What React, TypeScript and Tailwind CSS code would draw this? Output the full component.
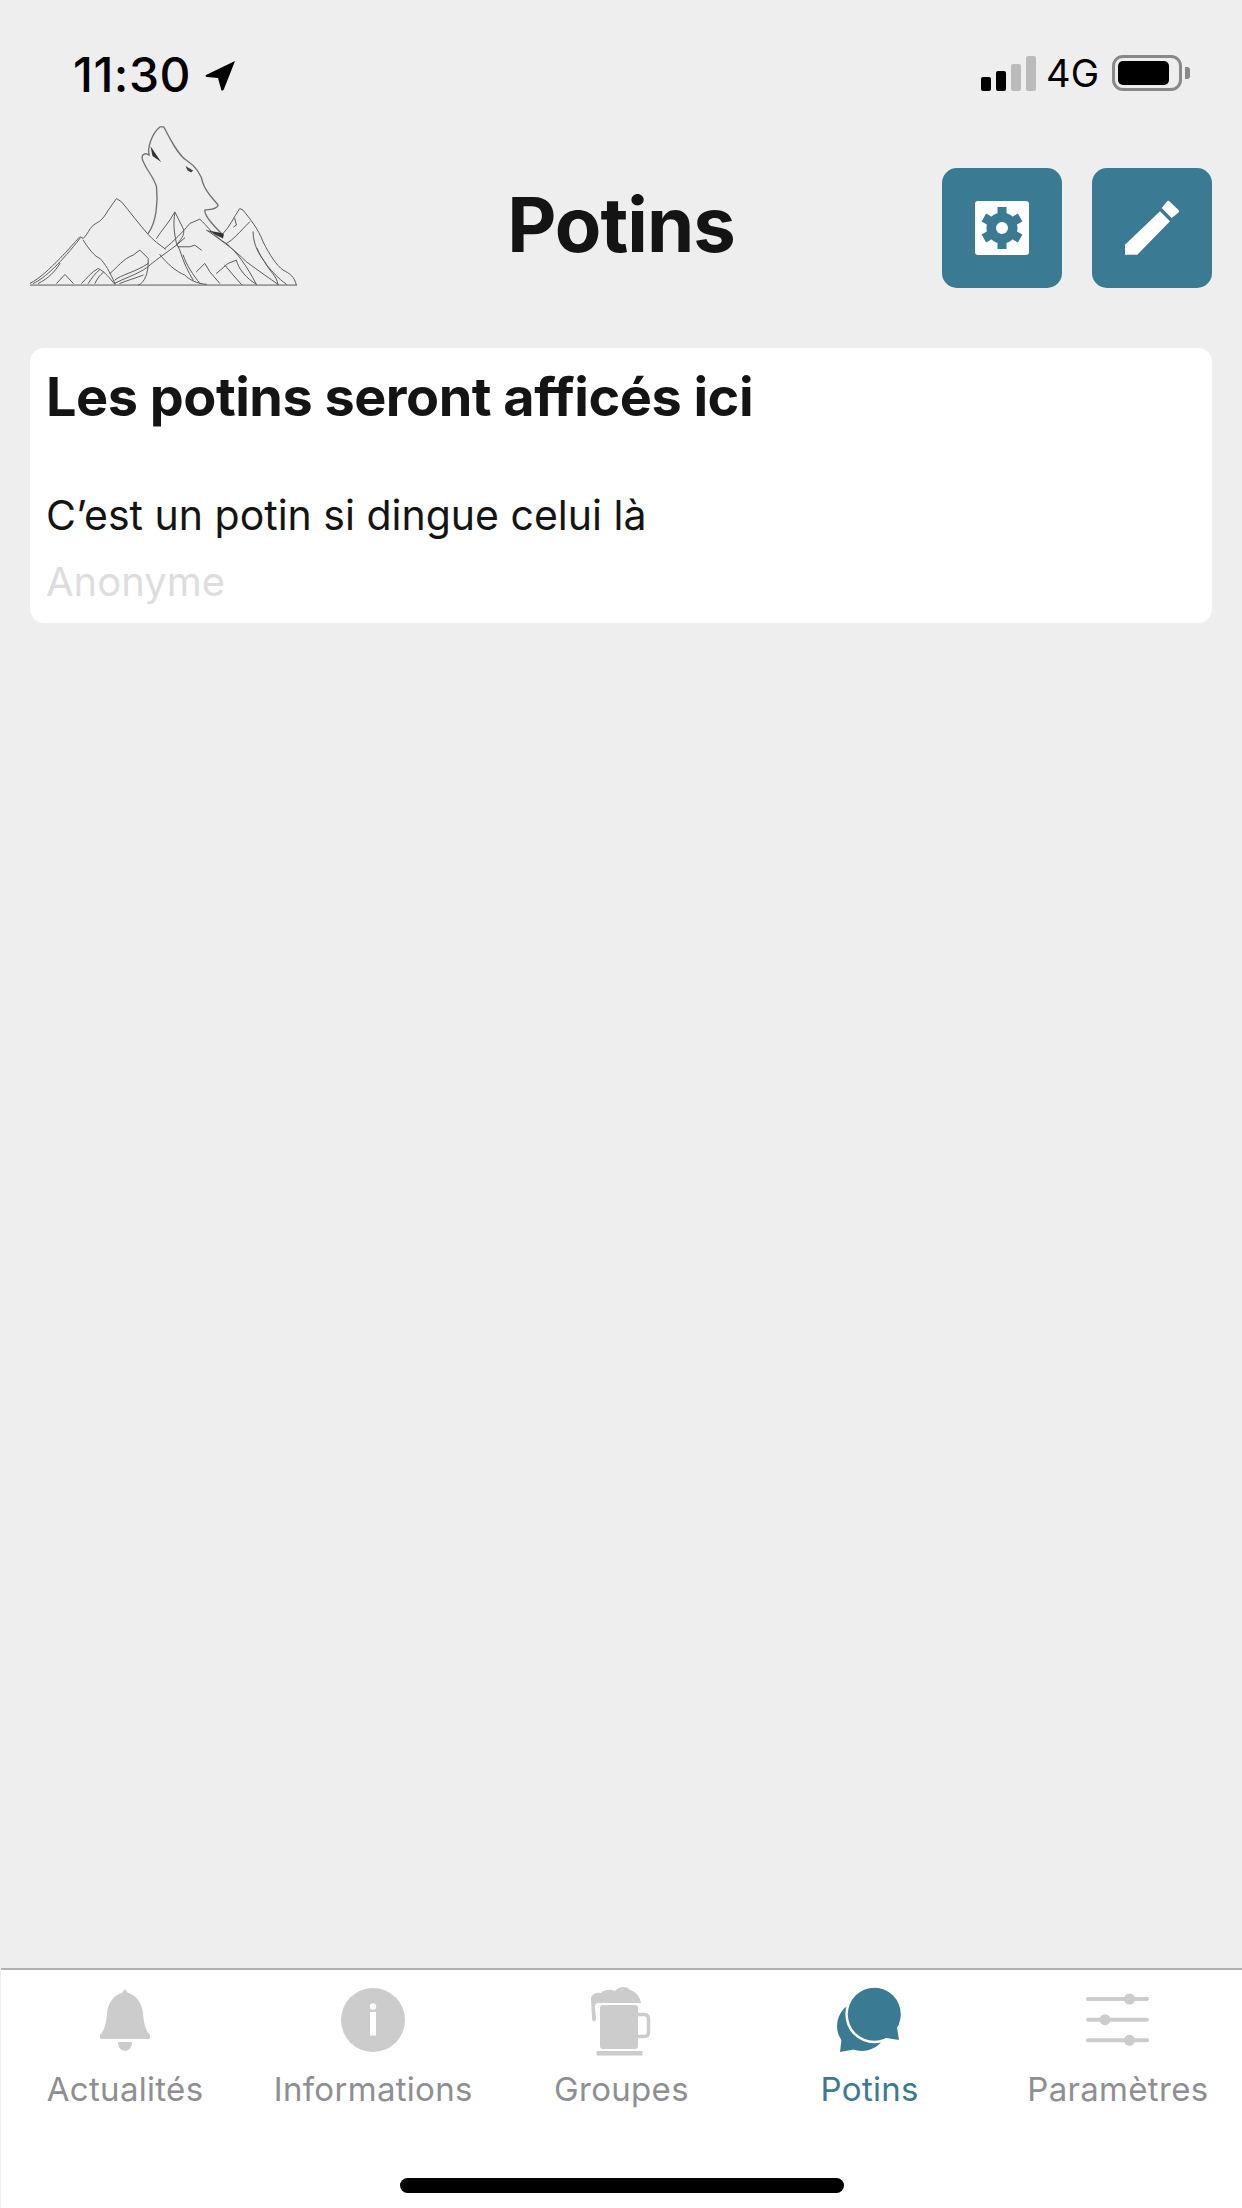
import React from "react";

const tabs = ["Actualités", "Informations", "Groupes", "Potins", "Paramètres"];

function Logo() {
  return (
    <svg width="268" height="162" viewBox="30 30 805 485" fill="none" stroke="#5a5a5a" strokeWidth="3" strokeLinejoin="round" strokeLinecap="round" className="mb-px">
      <path strokeWidth="4" stroke="#707070" d="M385 355C410 320 415 260 410 215C400 180 375 160 367 130C365 115 378 112 388 120C382 100 395 55 420 35L432 35C450 70 475 120 500 135C530 155 545 180 550 205C560 235 585 255 595 270C590 285 565 282 555 285C555 305 585 335 610 360" />
      <path fill="#333" stroke="none" d="M392 93L424 140L398 122Z" />
      <path fill="#444" stroke="none" d="M497 152L520 166L514 172L503 166Z" />
      <path fill="#333" stroke="none" d="M562 345L612 355L610 370L585 358Z" />
      <path d="M30 510L830 510" />
      <path d="M30 505C60 490 90 460 120 430C140 410 165 380 180 365L190 370C205 355 205 345 220 330C235 320 245 320 265 285L290 250L305 260C330 290 360 330 385 358C400 375 420 390 437 402" />
      <path d="M190 375C205 400 225 425 240 430C255 445 270 470 285 505" />
      <path d="M40 505C75 490 125 440 180 370M55 505C85 490 105 470 120 445" />
      <path d="M110 505L135 478L160 505" />
      <path d="M185 505C200 490 215 470 235 460C255 470 270 490 285 508M205 505C215 490 225 475 238 465M225 505C232 490 240 480 250 472" />
      <path d="M270 475C290 460 310 430 340 420L360 405L385 430L385 445C350 470 300 480 285 495" />
      <path d="M285 505C310 490 350 480 385 455C400 440 430 420 470 390L495 368" />
      <path d="M300 505C325 495 345 490 370 480M355 510C375 505 385 470 385 445" />
      <path d="M420 418C440 445 470 470 495 480C510 495 530 505 560 508" />
      <path d="M410 370C425 345 450 320 465 290L490 340C498 360 480 375 470 390" />
      <path d="M465 295C460 320 462 350 470 385L480 405C490 440 505 470 520 495M490 420C500 450 520 480 540 505" />
      <path d="M435 400C460 380 490 350 510 325L540 312C560 330 590 370 620 385C650 410 680 450 710 508" />
      <path d="M475 395L510 395L525 390L545 405" />
      <path d="M560 345C590 365 640 400 680 440C720 470 750 490 775 508" />
      <path d="M530 470L555 445L570 470L600 505M590 475L625 445L650 435C655 460 680 490 710 508M615 450C630 470 650 490 665 508" />
      <path d="M610 355C630 335 640 310 660 280L670 285C690 310 715 340 730 380C750 420 770 450 790 465C810 475 825 485 830 510" />
      <path d="M620 385C640 375 660 350 690 320M700 350C700 390 720 420 735 440C750 470 770 480 775 508M645 310L650 330L642 335M712 400C725 430 750 470 800 508" />
    </svg>
  );
}

function GearIcon() {
  return (
    <svg width="54" height="54" viewBox="0 0 54 54">
      <rect width="54" height="54" rx="3" fill="#fff" />
      <circle cx="27" cy="27" r="15.5" fill="#3b7a93" />
      {[0, 60, 120, 180, 240, 300].map((a) => (
        <rect key={a} x="22.5" y="6" width="9" height="8" fill="#3b7a93" transform={`rotate(${a} 27 27)`} />
      ))}
      <circle cx="27" cy="27" r="6" fill="#fff" />
    </svg>
  );
}

function PencilIcon() {
  return (
    <svg width="60" height="60" viewBox="0 0 60 60" fill="#fff">
      <path d="M3 46.7L38 13.3L48 23.3L15.3 56.7H3Z" />
      <path d="M39.7 10L45 3.5Q46.3 2.2 47.6 3.5L56.5 12Q57.8 13.3 56.5 14.6L49.7 20Z" />
    </svg>
  );
}

function BellIcon() {
  return (
    <svg width="50" height="62" viewBox="0 0 50 62" fill="#cccccc">
      <path d="M25 0L28 4C36 6 42 14 43 24C44 36 46 42 50 46C51 48 50 50 48 50H2C0 50 -1 48 0 46C4 42 6 36 7 24C8 14 14 6 22 4Z" />
      <path d="M18 53H32C32 58 29 62 25 62C21 62 18 58 18 53Z" />
    </svg>
  );
}

function InfoIcon() {
  return (
    <svg width="64" height="64" viewBox="0 0 64 64">
      <circle cx="32" cy="32" r="32" fill="#cccccc" />
      <circle cx="32" cy="18.5" r="3.2" fill="#fff" />
      <rect x="29" y="24" width="6" height="23.5" fill="#fff" />
    </svg>
  );
}

function MugIcon() {
  return (
    <svg width="61" height="71" viewBox="21 9 61 71" fill="#cccccc">
      <path d="M21 24C20 19 26 16 31 17C35 13 41 13 45 15C49 10 57 10 60 14C65 15 70 20 71 27H28C26 27 25 29 25 31L26 43C26 46 22 46 22 43Z" />
      <rect x="30" y="29" width="38" height="44" rx="3" />
      <path d="M68 38.5H74Q78.5 38.5 78.5 43V56Q78.5 60.5 74 60.5H68" fill="none" stroke="#cccccc" strokeWidth="3.5" />
      <rect x="26.5" y="75" width="46" height="4.5" rx="1" />
    </svg>
  );
}

function ChatIcon() {
  return (
    <svg width="66" height="66" viewBox="17 12 66 66" fill="#3b7a93">
      <circle cx="42" cy="51" r="25" />
      <path d="M20 77L22 60L37 74Z" />
      <circle cx="54.3" cy="39.3" r="29" fill="#fff" />
      <circle cx="54.3" cy="39.3" r="26.5" />
      <path d="M79 65L76 46L60 62Z" />
    </svg>
  );
}

function SlidersIcon() {
  return (
    <svg width="64" height="64" viewBox="265 13 64 64" fill="#cccccc">
      <rect x="265" y="22" width="63" height="4" rx="2" />
      <rect x="265" y="42.7" width="63" height="4" rx="2" />
      <rect x="265" y="63.3" width="63" height="4" rx="2" />
      <circle cx="308.5" cy="24" r="5.5" />
      <circle cx="284" cy="44.7" r="5.5" />
      <circle cx="308.5" cy="65.3" r="5.5" />
    </svg>
  );
}

const tabIcons = [<BellIcon />, <InfoIcon />, <MugIcon />, <ChatIcon />, <SlidersIcon />];

function App() {
  return (
    <div className="w-[1242px] h-[2208px] flex flex-col bg-[#eeeeee] font-['Inter',sans-serif] text-[#141414] overflow-hidden">
      <div className="h-[112px] shrink-0 flex items-start justify-between pl-[73px] pr-[52px] pt-[53px] text-black">
        <div className="flex items-center gap-[14px] h-[44px]">
          <span className="text-[48px] leading-[44px] font-medium tracking-[0.5px]">11:30</span>
          <svg width="30" height="31" viewBox="0 0 30 31" fill="#000">
            <path d="M30 1L1 15C0 16 1 17 2 17L13 18L16 29C16 31 18 31 19 29Z" />
          </svg>
        </div>
        <div className="flex items-end h-[39px] -mt-[1px]">
          <div className="flex items-end gap-[5px]">
            <div className="w-[10px] h-[14px] rounded-[2px] bg-black" />
            <div className="w-[10px] h-[20px] rounded-[2px] bg-black" />
            <div className="w-[10px] h-[27px] rounded-[2px] bg-[#bbbbbb]" />
            <div className="w-[10px] h-[35px] rounded-[2px] bg-[#bbbbbb]" />
          </div>
          <span className="ml-[10px] text-[38px] leading-[39px] -mb-[2px]">4G</span>
          <div className="ml-[13px] flex items-center">
            <div className="w-[70px] h-[36px] rounded-[11px] border-[3px] border-[#888888] p-[3px]">
              <div className="w-[51px] h-full rounded-[5px] bg-black" />
            </div>
            <div className="ml-[3px] w-[5px] h-[12px] rounded-r-[3px] bg-[#888888]" />
          </div>
        </div>
      </div>

      <div className="h-[176px] shrink-0 grid grid-cols-[1fr_auto_1fr] items-end px-[30px]">
        <Logo />
        <h1 className="text-[76px] leading-[90px] font-bold tracking-[-1px] mb-[19px]">Potins</h1>
        <div className="flex justify-end gap-[30px]">
          <div className="w-[120px] h-[120px] rounded-[15px] bg-[#3b7a93] flex items-center justify-center">
            <GearIcon />
          </div>
          <div className="w-[120px] h-[120px] rounded-[15px] bg-[#3b7a93] flex items-center justify-center">
            <PencilIcon />
          </div>
        </div>
      </div>

      <div className="mt-[60px] mx-[30px] h-[275px] shrink-0 rounded-[14px] bg-white px-[16px] pt-[19px]">
        <h2 className="text-[54px] leading-[60px] font-bold tracking-[-0.5px]">Les potins seront afficés ici</h2>
        <p className="mt-[63px] text-[41px] leading-[50px]">C’est un potin si dingue celui là</p>
        <p className="mt-[17px] text-[40px] leading-[50px] text-[#dddddd]">Anonyme</p>
      </div>

      <div className="flex-1" />

      <div className="h-[240px] shrink-0 ml-px border-t-2 border-[#b0b0b0] bg-white">
        <div className="grid grid-cols-5 pt-[15px]">
          {tabs.map((label, i) => (
            <div key={label} className="flex flex-col items-center">
              <div className="h-[70px] flex items-center justify-center">{tabIcons[i]}</div>
              <span className={`mt-[14px] text-[33px] leading-[40px] tracking-[0.3px] ${label === "Potins" ? "text-[#3b7a93]" : "text-[#8e8e93]"}`}>
                {label}
              </span>
            </div>
          ))}
        </div>
        <div className="mt-[69px] mx-auto w-[444px] h-[15px] rounded-full bg-black" />
      </div>
    </div>
  );
}

export default App;
